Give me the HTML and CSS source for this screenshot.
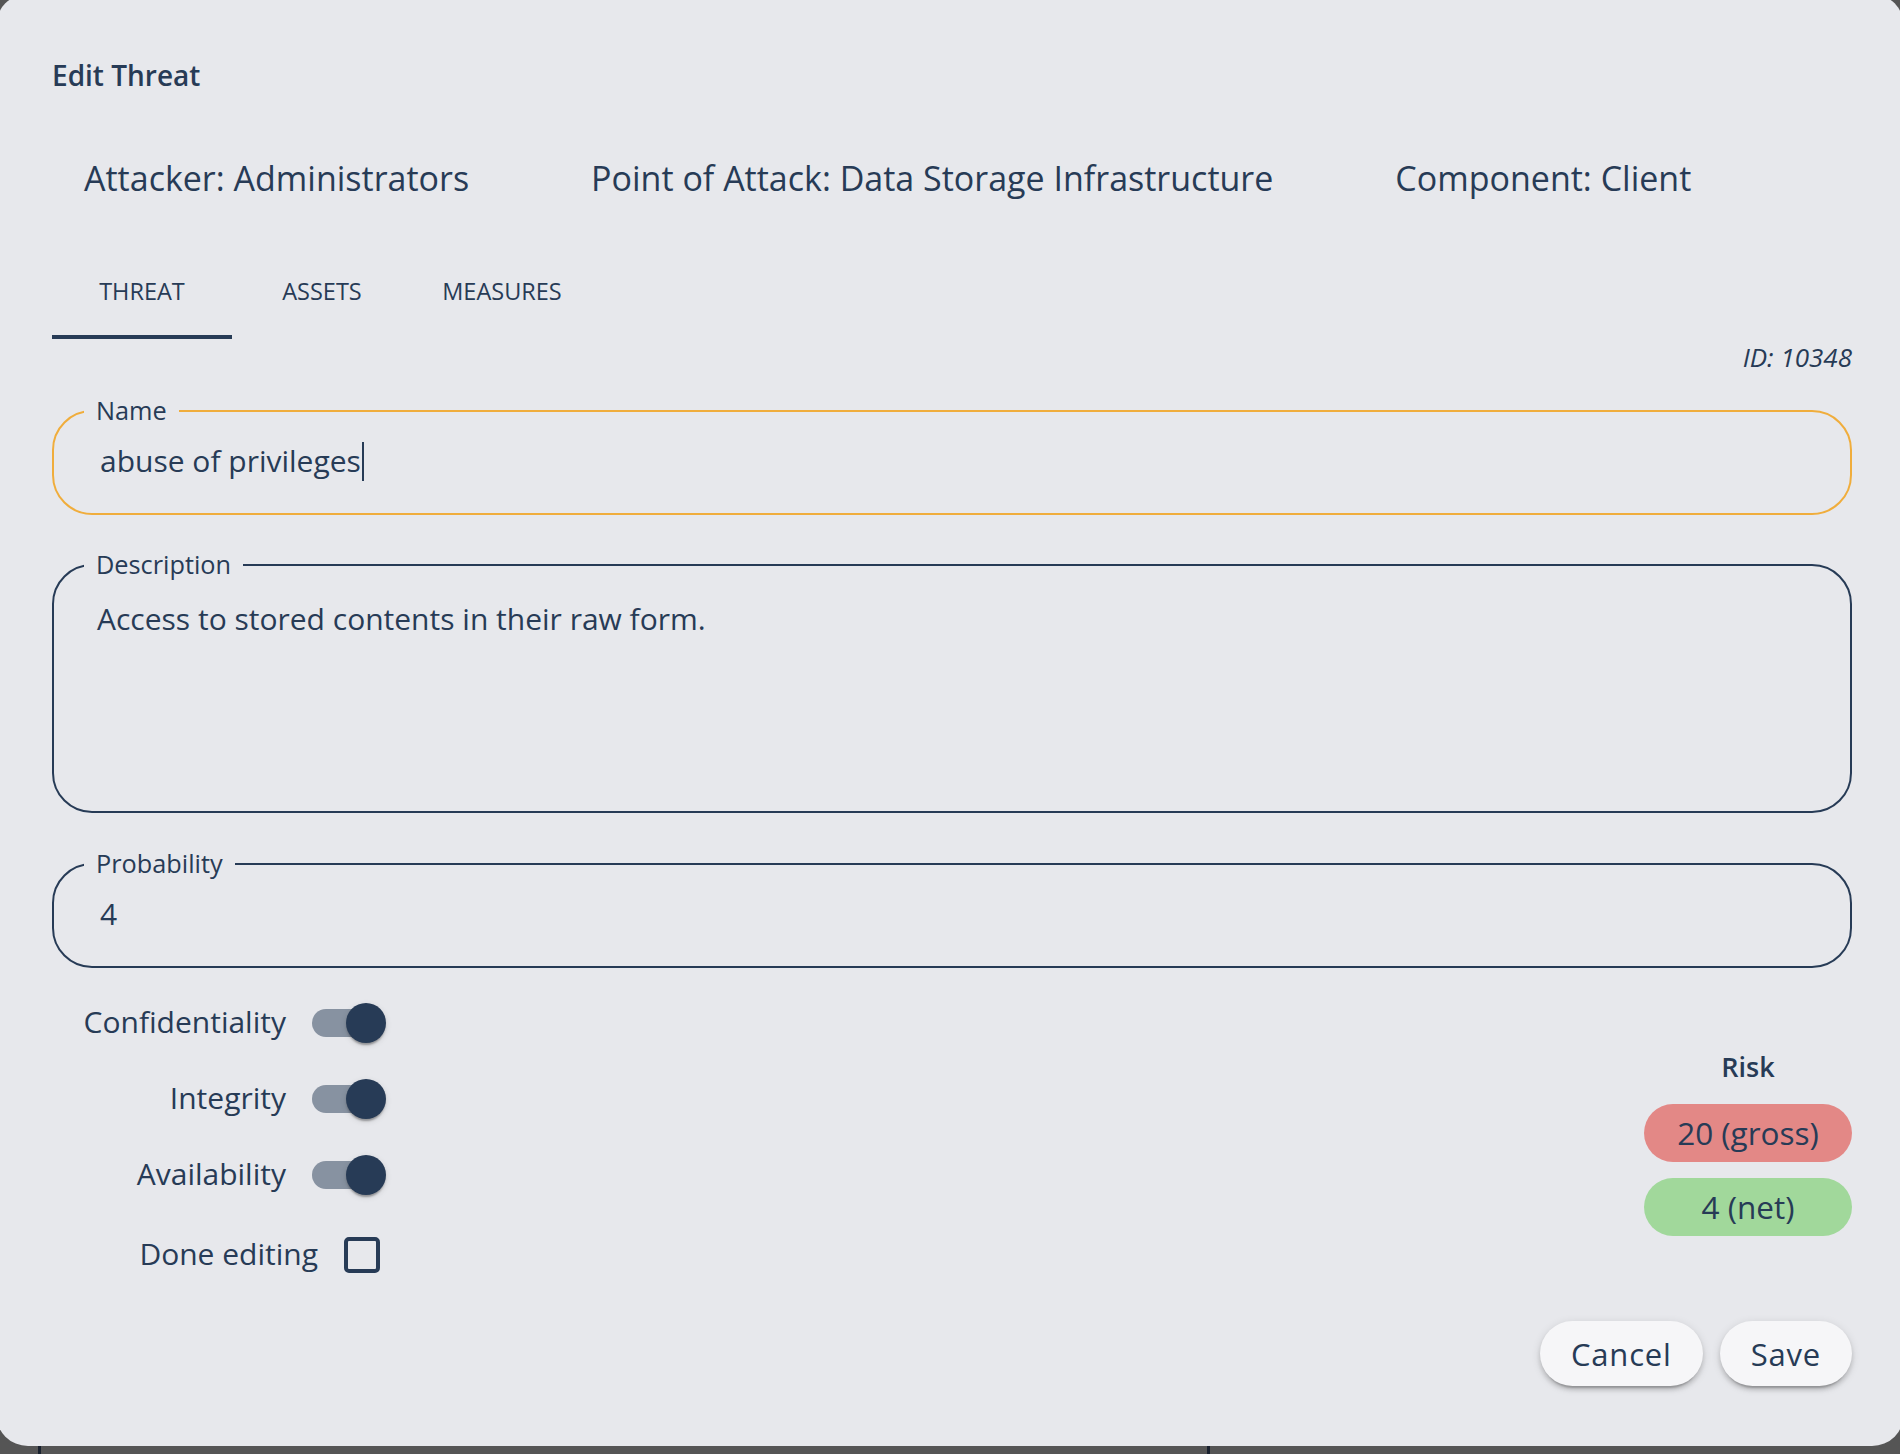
FILE: index.html
```html
<!DOCTYPE html>
<html lang="en">
<head>
<meta charset="utf-8">
<title>Edit Threat</title>
<link rel="stylesheet" href="styles.css">
</head>
<body>
<div class="page">
  <div class="page-col first"></div>
  <div class="page-col"></div>
</div>
<div class="dialog" role="dialog" aria-labelledby="dlg-title">
  <h2 class="title" id="dlg-title">Edit Threat</h2>
  <div class="info">
    <span>Attacker: Administrators</span>
    <span>Point of Attack: Data Storage Infrastructure</span>
    <span>Component: Client</span>
  </div>
  <div class="tabs">
    <div class="tab active">THREAT</div>
    <div class="tab">ASSETS</div>
    <div class="tab">MEASURES</div>
  </div>
  <div class="id">ID: 10348</div>

  <div class="field focused field-name">
    <span class="field-label">Name</span>
    <div class="field-value">abuse of privileges<span class="caret"></span></div>
  </div>

  <div class="field field-desc">
    <span class="field-label">Description</span>
    <div class="field-value">Access to stored contents in their raw form.</div>
  </div>

  <div class="field field-prob">
    <span class="field-label">Probability</span>
    <div class="field-value">4</div>
  </div>

  <div class="lower">
    <div class="controls">
      <div class="control-row">
        <span class="control-label">Confidentiality</span>
        <span class="switch"><span class="track"></span><span class="thumb"></span></span>
      </div>
      <div class="control-row">
        <span class="control-label">Integrity</span>
        <span class="switch"><span class="track"></span><span class="thumb"></span></span>
      </div>
      <div class="control-row">
        <span class="control-label">Availability</span>
        <span class="switch"><span class="track"></span><span class="thumb"></span></span>
      </div>
      <div class="control-row check-row">
        <span class="control-label">Done editing</span>
        <span class="checkbox"><span class="box"></span></span>
      </div>
    </div>
    <div class="risk">
      <div class="risk-title">Risk</div>
      <div class="pill gross">20 (gross)</div>
      <div class="pill net">4 (net)</div>
    </div>
  </div>

  <div class="actions">
    <button class="btn">Cancel</button>
    <button class="btn">Save</button>
  </div>
</div>
</body>
</html>
```

FILE: styles.css
```css
html, body {
  margin: 0;
  padding: 0;
  width: 1900px;
  height: 1454px;
  overflow: hidden;
}

body {
  font-family: "Open Sans", "Noto Sans", sans-serif;
  color: #273b56;
  background: #555555;
}

.page {
  position: fixed;
  inset: 0;
  display: flex;
  background: #555555;
}

.page-col {
  border-left: 3px solid #19212e;
}

.page-col.first {
  margin-left: 38px;
  width: 1166px;
}

.dialog {
  position: absolute;
  left: -4px;
  top: -6px;
  width: 1908px;
  height: 1452px;
  box-sizing: border-box;
  padding: 61px 52px 0 56px;
  background: #e7e8ec;
  border-radius: 32px;
  display: flex;
  flex-direction: column;
}

.title {
  margin: 0;
  font-size: 28px;
  line-height: 40px;
  font-weight: 600;
  letter-spacing: 0;
}

.info {
  display: flex;
  gap: 122px;
  margin-top: 60px;
  padding-left: 32px;
  font-size: 34px;
  line-height: 46px;
}

.tabs {
  display: flex;
  margin-top: 42px;
}

.tab {
  width: 180px;
  height: 96px;
  line-height: 96px;
  text-align: center;
  font-size: 23.5px;
  letter-spacing: 0;
}

.tab.active {
  box-shadow: inset 0 -4px 0 #273b56;
}

.id {
  margin-top: 2px;
  align-self: flex-end;
  font-size: 26px;
  line-height: 32px;
  font-style: italic;
}

.field {
  position: relative;
  box-sizing: border-box;
  height: 105px;
  border: 2px solid #273b56;
  border-radius: 40px;
  padding: 29px 46px 0;
}

.field.focused {
  border-color: #f0ad3c;
}

.field-name {
  margin-top: 37px;
}

.field-desc {
  margin-top: 49px;
  height: 249px;
  padding: 33px 43px 0;
}

.field-prob {
  margin-top: 50px;
}

.field-label {
  position: absolute;
  top: -16px;
  left: 30px;
  padding: 0 12px;
  background: #e7e8ec;
  font-size: 25.3px;
  line-height: 28px;
}

.field-value {
  font-size: 30px;
  line-height: 40px;
  display: flex;
  align-items: center;
}

.caret {
  display: inline-block;
  width: 2px;
  height: 39px;
  margin-left: 1px;
  background: #273b56;
}

.lower {
  margin-top: 17px;
  display: flex;
  justify-content: space-between;
  align-items: center;
}

.controls {
  width: 352px;
  display: flex;
  flex-direction: column;
  align-items: flex-end;
}

.control-row {
  display: flex;
  align-items: center;
  gap: 2px;
  height: 76px;
}

.control-row.check-row {
  height: 84px;
}

.control-label {
  font-size: 30px;
  line-height: 40px;
  margin-top: -2px;
}

.switch {
  position: relative;
  display: block;
  width: 116px;
  height: 76px;
  box-sizing: border-box;
  padding: 24px;
}

.track {
  display: block;
  width: 68px;
  height: 28px;
  border-radius: 14px;
  background: rgba(39, 59, 86, 0.5);
}

.thumb {
  position: absolute;
  left: 58px;
  top: 18px;
  width: 40px;
  height: 40px;
  border-radius: 50%;
  background: #273b56;
  box-shadow: 0 4px 2px -2px rgba(0,0,0,0.2), 0 2px 2px 0 rgba(0,0,0,0.14), 0 2px 6px 0 rgba(0,0,0,0.12);
}

.checkbox {
  display: flex;
  width: 84px;
  height: 84px;
  align-items: center;
  justify-content: center;
}

.box {
  box-sizing: border-box;
  width: 36px;
  height: 36px;
  border: 4px solid #273b56;
  border-radius: 5px;
}

.risk {
  width: 208px;
  display: flex;
  flex-direction: column;
  align-items: center;
  gap: 16px;
}

.risk-title {
  font-size: 27px;
  line-height: 40px;
  font-weight: 600;
  margin-bottom: 1px;
}

.pill {
  width: 208px;
  height: 58px;
  border-radius: 29px;
  text-align: center;
  font-size: 31.5px;
  line-height: 58px;
}

.pill.gross {
  background: #e38886;
}

.pill.net {
  background: #a1d89b;
}

.actions {
  margin-top: 24px;
  display: flex;
  justify-content: flex-end;
  gap: 17px;
}

.btn {
  font-family: inherit;
  color: #273b56;
  font-size: 31px;
  letter-spacing: 0.8px;
  height: 65px;
  padding: 0 31px;
  border: none;
  border-radius: 33px;
  background: #f6f6f8;
  box-shadow: 0 6px 2px -4px rgba(0,0,0,0.2), 0 4px 4px 0 rgba(0,0,0,0.14), 0 2px 10px 0 rgba(0,0,0,0.12);
}
```
